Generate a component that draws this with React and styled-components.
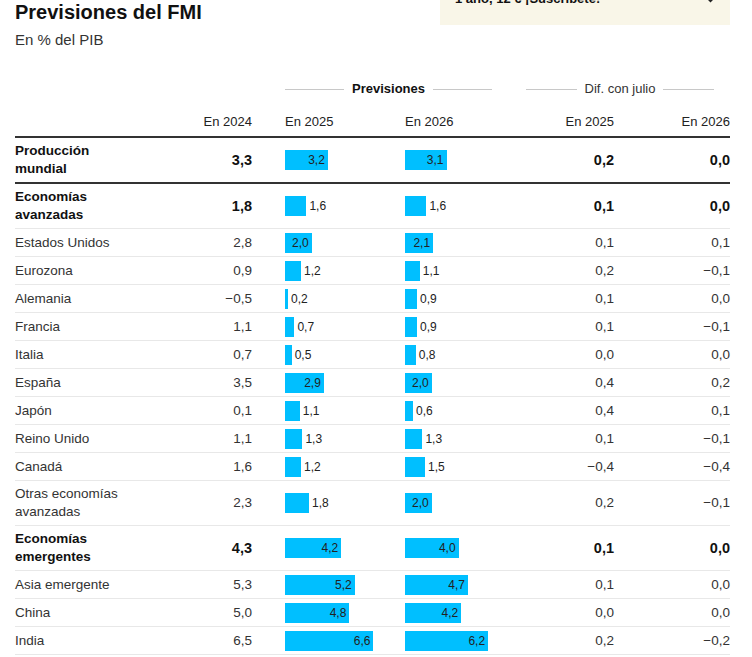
import React from "react";
import styled, { createGlobalStyle, css } from "styled-components";

const GlobalStyle = createGlobalStyle`
  body {
    margin: 0;
    background: #fff;
    font-family: "Liberation Sans", Arial, sans-serif;
    color: #222;
  }
`;

const SCALE = 13.4;

const Page = styled.div`
  width: 715px;
  padding-left: 15px;
`;

const Header = styled.header`
  display: flex;
  justify-content: space-between;
  align-items: flex-start;
`;

const Title = styled.h1`
  margin: 0;
  font-size: 20px;
  line-height: 24px;
  font-weight: 700;
  color: #111;
`;

const Promo = styled.div`
  width: 290px;
  height: 25px;
  overflow: hidden;
  background: #f9f6e8;
  box-sizing: border-box;
  padding: 0 14px 0 15px;
`;

const PromoLine = styled.div`
  display: flex;
  justify-content: space-between;
  align-items: center;
  margin-top: -9px;
  line-height: 16px;
  font-size: 13px;
  font-weight: 700;
  color: #111;
`;

const Subtitle = styled.p`
  margin: 6px 0 0;
  font-size: 15px;
  line-height: 18px;
  color: #333;
`;

const Table = styled.div`
  margin-top: 31px;
`;

const COLS = "185px 52px 120px 120px 122px 116px";

const GroupRow = styled.div`
  display: grid;
  grid-template-columns: ${COLS};
  height: 18px;
`;

const Group = styled.div`
  grid-column: ${p => p.$span};
  display: flex;
  align-items: center;
  gap: 8px;
  padding: ${p => p.$pad};
  font-size: 13px;
  line-height: 18px;
  font-weight: ${p => (p.$bold ? 700 : 400)};
  color: ${p => (p.$bold ? "#111" : "#333")};
  white-space: nowrap;
`;

const GroupLine = styled.span`
  flex: 1;
  height: 1px;
  background: #c8c8c8;
`;

const HeadRow = styled.div`
  display: grid;
  grid-template-columns: ${COLS};
  margin-top: 15px;
  padding-bottom: 5px;
  border-bottom: 2px solid #333;
  font-size: 13px;
  line-height: 18px;
  color: #222;
`;

const HeadCell = styled.div`
  text-align: ${p => (p.$left ? "left" : "right")};
  padding-left: ${p => (p.$left ? "33px" : "0")};
`;

const Row = styled.div`
  display: grid;
  grid-template-columns: ${COLS};
  align-items: center;
  min-height: 28px;
  box-sizing: border-box;
  padding: ${p => (p.$tall ? "4px 0 4px" : "0")};
  border-bottom: ${p => (p.$dark ? "2px solid #333" : "1px solid #e8e8e8")};
  font-size: 13.5px;
  line-height: 18px;
  ${p =>
    p.$bold &&
    css`
      font-weight: 700;
      color: #111;
    `}
`;

const Label = styled.div`
  max-width: 125px;
  color: ${p => (p.$bold ? "#111" : "#333")};
`;

const Num = styled.div`
  text-align: right;
  font-size: ${p => (p.$bold ? "14.5px" : "13.5px")};
  color: ${p => (p.$bold ? "#111" : "#333")};
`;

const BarCell = styled.div`
  display: flex;
  align-items: center;
  padding-left: 33px;
  height: 20px;
`;

const Bar = styled.div`
  height: 20px;
  background: #00bfff;
  display: flex;
  align-items: center;
  justify-content: flex-end;
  box-sizing: border-box;
  padding-right: 3px;
  flex-shrink: 0;
`;

const BarValue = styled.span`
  font-size: 12px;
  font-weight: 400;
  color: #222;
  margin-left: ${p => (p.$outside ? "3px" : "0")};
`;

const data = [
  { name: "Producción mundial", v24: "3,3", v25: 3.2, v26: 3.1, d25: "0,2", d26: "0,0", bold: true, tall: true, dark: true },
  { name: "Economías avanzadas", v24: "1,8", v25: 1.6, v26: 1.6, d25: "0,1", d26: "0,0", bold: true, tall: true },
  { name: "Estados Unidos", v24: "2,8", v25: 2.0, v26: 2.1, d25: "0,1", d26: "0,1" },
  { name: "Eurozona", v24: "0,9", v25: 1.2, v26: 1.1, d25: "0,2", d26: "−0,1" },
  { name: "Alemania", v24: "−0,5", v25: 0.2, v26: 0.9, d25: "0,1", d26: "0,0" },
  { name: "Francia", v24: "1,1", v25: 0.7, v26: 0.9, d25: "0,1", d26: "−0,1" },
  { name: "Italia", v24: "0,7", v25: 0.5, v26: 0.8, d25: "0,0", d26: "0,0" },
  { name: "España", v24: "3,5", v25: 2.9, v26: 2.0, d25: "0,4", d26: "0,2" },
  { name: "Japón", v24: "0,1", v25: 1.1, v26: 0.6, d25: "0,4", d26: "0,1" },
  { name: "Reino Unido", v24: "1,1", v25: 1.3, v26: 1.3, d25: "0,1", d26: "−0,1" },
  { name: "Canadá", v24: "1,6", v25: 1.2, v26: 1.5, d25: "−0,4", d26: "−0,4" },
  { name: "Otras economías avanzadas", v24: "2,3", v25: 1.8, v26: 2.0, d25: "0,2", d26: "−0,1", tall: true },
  { name: "Economías emergentes", v24: "4,3", v25: 4.2, v26: 4.0, d25: "0,1", d26: "0,0", bold: true, tall: true },
  { name: "Asia emergente", v24: "5,3", v25: 5.2, v26: 4.7, d25: "0,1", d26: "0,0" },
  { name: "China", v24: "5,0", v25: 4.8, v26: 4.2, d25: "0,0", d26: "0,0" },
  { name: "India", v24: "6,5", v25: 6.6, v26: 6.2, d25: "0,2", d26: "−0,2" },
];

const fmt = v => v.toFixed(1).replace(".", ",");

function BarValueCell({ value }) {
  const inside = value >= 2;
  return (
    <BarCell>
      <Bar style={{ width: `${value * SCALE}px` }}>
        {inside && <BarValue>{fmt(value)}</BarValue>}
      </Bar>
      {!inside && <BarValue $outside>{fmt(value)}</BarValue>}
    </BarCell>
  );
}

function Chevron() {
  return (
    <svg width="11" height="7" viewBox="0 0 11 7" fill="none" stroke="#222" strokeWidth="1.4">
      <path d="M1 1l4.5 4.5L10 1" />
    </svg>
  );
}

export default function App() {
  return (
    <Page>
      <GlobalStyle />
      <Header>
        <Title>Previsiones del FMI</Title>
        <Promo>
          <PromoLine>
            <span>1 año, 12 € ¡Suscríbete!</span>
            <Chevron />
          </PromoLine>
        </Promo>
      </Header>
      <Subtitle>En % del PIB</Subtitle>
      <Table>
        <GroupRow>
          <Group $span="3 / 5" $pad="0 0 0 33px" $bold>
            <GroupLine />
            Previsiones
            <GroupLine />
          </Group>
          <Group $span="5 / 7" $pad="0 16px 0 34px">
            <GroupLine />
            Dif. con julio
            <GroupLine />
          </Group>
        </GroupRow>
        <HeadRow>
          <div />
          <HeadCell>En 2024</HeadCell>
          <HeadCell $left>En 2025</HeadCell>
          <HeadCell $left>En 2026</HeadCell>
          <HeadCell>En 2025</HeadCell>
          <HeadCell>En 2026</HeadCell>
        </HeadRow>
        {data.map(r => (
          <Row key={r.name} $bold={r.bold} $tall={r.tall} $dark={r.dark}>
            <Label $bold={r.bold}>{r.name}</Label>
            <Num $bold={r.bold}>{r.v24}</Num>
            <BarValueCell value={r.v25} />
            <BarValueCell value={r.v26} />
            <Num $bold={r.bold}>{r.d25}</Num>
            <Num $bold={r.bold}>{r.d26}</Num>
          </Row>
        ))}
      </Table>
    </Page>
  );
}
